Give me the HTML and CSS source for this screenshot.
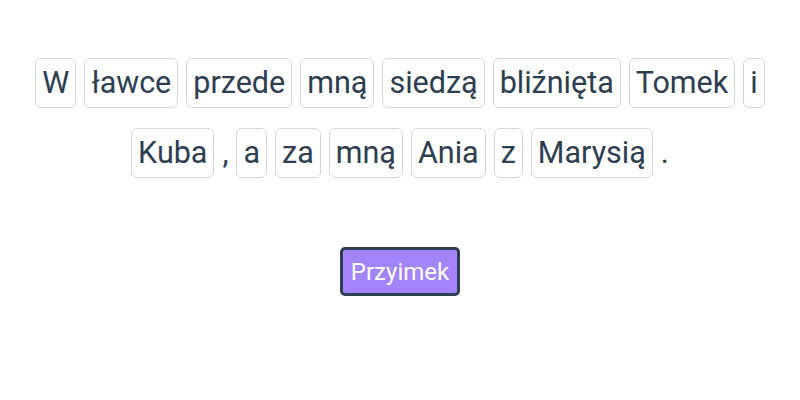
FILE: index.html
```html
<!DOCTYPE html>
<html lang="pl">
<head>
<meta charset="utf-8">
<link rel="stylesheet" href="styles.css">
</head>
<body>
<div class="app">
  <div class="sentence">
    <span class="word">W</span>
    <span class="word">ławce</span>
    <span class="word">przede</span>
    <span class="word">mną</span>
    <span class="word">siedzą</span>
    <span class="word">bliźnięta</span>
    <span class="word">Tomek</span>
    <span class="word">i</span>
    <span class="word">Kuba</span>
    <span class="punct">,</span>
    <span class="word">a</span>
    <span class="word">za</span>
    <span class="word">mną</span>
    <span class="word">Ania</span>
    <span class="word">z</span>
    <span class="word">Marysią</span>
    <span class="punct">.</span>
  </div>
  <div class="actions">
    <button class="tag">Przyimek</button>
  </div>
</div>
</body>
</html>
```
FILE: styles.css
```css
html, body {
  margin: 0;
  padding: 0;
  background: #ffffff;
}
body {
  font-family: Roboto, "Liberation Sans", sans-serif;
  color: #2c3e50;
}
.app {
  padding-top: 48px;
  display: flex;
  flex-direction: column;
  align-items: center;
}
.sentence {
  width: 780px;
  display: flex;
  flex-wrap: wrap;
  justify-content: center;
  align-items: center;
  margin: 0 auto;
}
.word {
  margin: 10px 4px;
  padding: 6px 6px;
  font-size: 30.5px;
  line-height: 36px;
  border: 1px solid #d3d7dc;
  border-radius: 6px;
}
.punct {
  margin: 10px 4px;
  font-size: 30.5px;
  line-height: 36px;
}
.actions {
  margin-top: 59px;
}
.tag {
  font-family: Roboto, "Liberation Sans", sans-serif;
  font-size: 24px;
  line-height: 28px;
  color: #ffffff;
  background: #a484fa;
  border: 3px solid #2f3e52;
  border-radius: 5px;
  padding: 0;
  width: 120px;
  height: 49px;
}
```
